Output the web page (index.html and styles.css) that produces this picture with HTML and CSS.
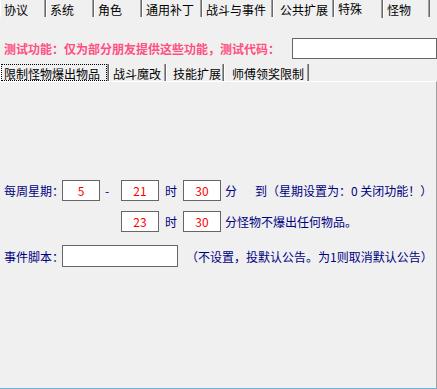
FILE: index.html
```html
<!DOCTYPE html>
<html>
<head>
<meta charset="utf-8">
<link rel="stylesheet" href="styles.css">
</head>
<body>
<div class="tabs">
  <div class="tab t1">协议</div>
  <div class="tab t2">系统</div>
  <div class="tab t3">角色</div>
  <div class="tab t4">通用补丁</div>
  <div class="tab t5">战斗与事件</div>
  <div class="tab t6">公共扩展</div>
  <div class="tab t7 active">特殊</div>
  <div class="tab t8">怪物</div>
</div>
<div class="title-row">
  <span class="title">测试功能：仅为部分朋友提供这些功能，测试代码：</span>
  <div class="box code"></div>
</div>
<div class="subtabs">
  <div class="subtab s1 active"><span class="focus">限制怪物爆出物品</span></div>
  <div class="subtab s2">战斗魔改</div>
  <div class="subtab s3">技能扩展</div>
  <div class="subtab s4">师傅领奖限制</div>
</div>
<div class="panel">
  <div class="row r1">
    <span class="label">每周星期：</span>
    <div class="box num">5</div>
    <span class="dash">-</span>
    <div class="box num">21</div>
    <span class="unit">时</span>
    <div class="box num">30</div>
    <span class="after">分</span>
    <span class="note-far">到（星期设置为：0 关闭功能！）</span>
  </div>
  <div class="row r2">
    <div class="box num">23</div>
    <span class="unit">时</span>
    <div class="box num">30</div>
    <span class="after">分怪物不爆出任何物品。</span>
  </div>
  <div class="row r3">
    <span class="label">事件脚本：</span>
    <div class="box script"></div>
    <span class="note">（不设置，投默认公告。为1则取消默认公告）</span>
  </div>
</div>
</body>
</html>
```
FILE: styles.css
```css
* { box-sizing: border-box; }
html, body { margin: 0; padding: 0; }
body {
  width: 437px;
  height: 389px;
  background: #f0f0f0;
  font-family: "Noto Sans CJK SC", "Noto Sans", sans-serif;
  font-size: 12px;
  line-height: 15px;
  color: #000;
  display: flex;
  flex-direction: column;
  overflow: hidden;
}

/* top tab strip */
.tabs {
  display: flex;
  align-items: flex-start;
  height: 18px;
  flex: none;
}
.tab {
  height: 17px;
  padding: 2px 0 0 3px;
  border-left: 1px solid #fff;
  border-right: 1px solid #696969;
  box-shadow: inset -1px 0 #a0a0a0;
  white-space: nowrap;
}
.tab.active {
  height: 18px;
  padding-top: 0;
  line-height: 17px;
}
.t1 { width: 46px; }
.t2 { width: 48px; }
.t3 { width: 48px; }
.t4 { width: 60px; }
.t5 { width: 71px; }
.t6 { width: 61px; padding-left: 6px; }
.t7 { width: 49px; }
.t8 { width: 47px; }

/* title line */
.title-row {
  display: flex;
  align-items: center;
  height: 21px;
  margin-top: 20px;
  padding-left: 4px;
  flex: none;
}
.title {
  color: #ff4f81;
  font-weight: bold;
  white-space: nowrap;
}
.box {
  background: #fff;
  border: 1px solid #666;
  height: 21px;
  flex: none;
}
.code {
  width: 145px;
  margin-left: auto;
}

/* sub tabs */
.subtabs {
  display: flex;
  align-items: flex-start;
  height: 17px;
  margin-top: 5px;
  flex: none;
}
.subtab {
  height: 17px;
  padding: 2px 0 0 3px;
  border-left: 1px solid #fff;
  border-right: 1px solid #696969;
  box-shadow: inset -1px 0 #a0a0a0;
  white-space: nowrap;
}
.subtab.active {
  padding: 0 1px 0 0;
}
.focus {
  display: block;
  width: 106px;
  height: 17px;
  border: 1px dotted #000;
  padding: 1px 0 0 2px;
}
.s1 { width: 109px; }
.s2 { width: 57px; }
.s3 { width: 58px; padding-left: 6px; }
.s4 { width: 85px; padding-left: 7px; }

/* content panel */
.panel {
  flex: 1;
  border-top: 1px solid #fff;
  border-right: 1px solid #a0a0a0;
  border-bottom: 1px solid #72b3d8;
  padding-top: 98px;
  color: #000080;
}
.row {
  display: flex;
  align-items: center;
  height: 21px;
  white-space: nowrap;
}
.r1 { padding-left: 4px; }
.r2 { padding-left: 121px; margin-top: 10px; }
.r3 { padding-left: 4px; margin-top: 13px; height: 22px; }
.label { width: 58px; flex: none; }
.num {
  width: 38px;
  color: #f00;
  text-align: center;
  line-height: 19px;
}
.dash { width: 16px; margin-left: 5px; flex: none; }
.unit { width: 12px; margin: 0 6px; flex: none; }
.after { margin-left: 4px; }
.note-far { margin-left: 18px; }
.script { width: 116px; height: 22px; }
.note { margin-left: 8px; }
```
